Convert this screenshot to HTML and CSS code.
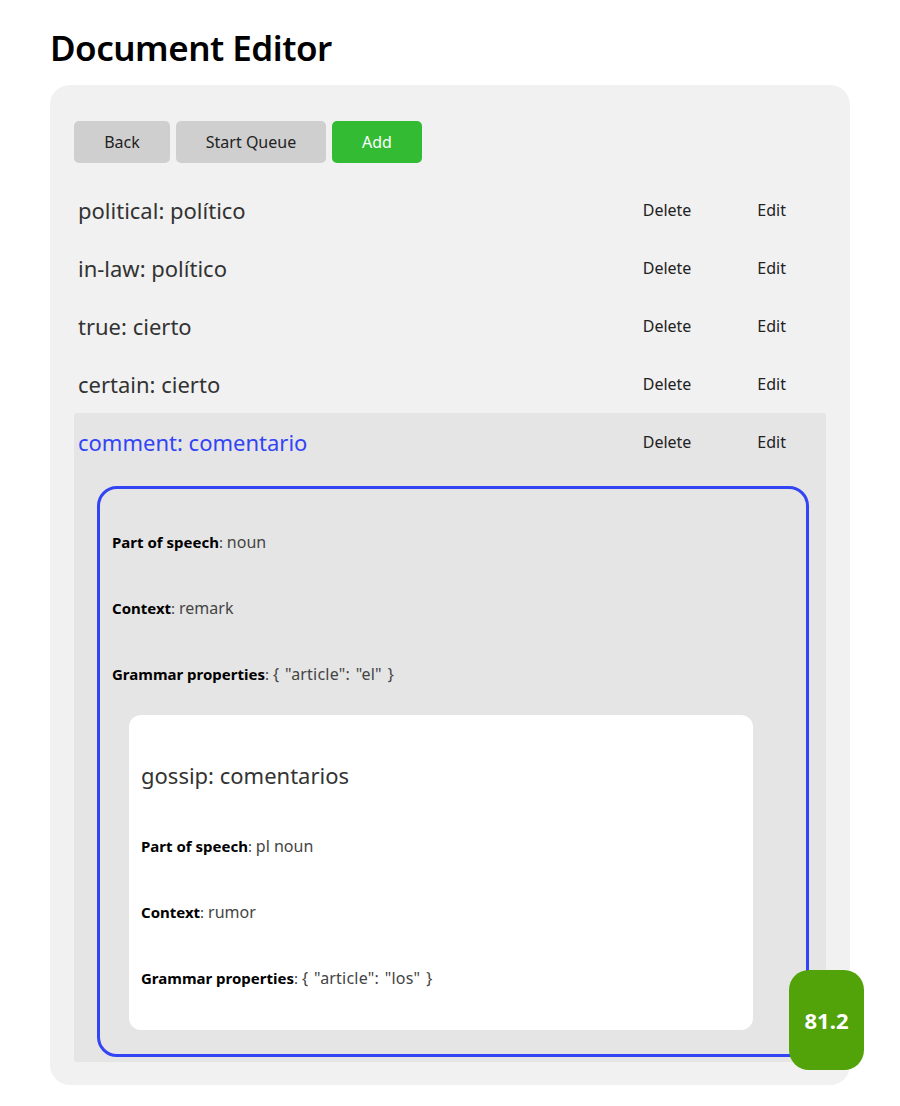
FILE: index.html
```html
<!DOCTYPE html>
<html lang="en">
<head>
<meta charset="utf-8">
<title>Document Editor</title>
<link rel="stylesheet" href="styles.css">
</head>
<body>
<div class="page">
  <h1 class="title">Document Editor</h1>
  <div class="panel">
    <div class="toolbar">
      <button class="btn btn-grey btn-back">Back</button>
      <button class="btn btn-grey btn-queue">Start Queue</button>
      <button class="btn btn-green btn-add">Add</button>
    </div>
    <div class="list">
      <div class="row">
        <div class="row-head">
          <span class="term">political: político</span>
          <div class="actions"><button class="link">Delete</button><button class="link">Edit</button></div>
        </div>
      </div>
      <div class="row">
        <div class="row-head">
          <span class="term">in-law: político</span>
          <div class="actions"><button class="link">Delete</button><button class="link">Edit</button></div>
        </div>
      </div>
      <div class="row">
        <div class="row-head">
          <span class="term">true: cierto</span>
          <div class="actions"><button class="link">Delete</button><button class="link">Edit</button></div>
        </div>
      </div>
      <div class="row">
        <div class="row-head">
          <span class="term">certain: cierto</span>
          <div class="actions"><button class="link">Delete</button><button class="link">Edit</button></div>
        </div>
      </div>
      <div class="row row-selected">
        <div class="row-head">
          <span class="term term-active">comment: comentario</span>
          <div class="actions"><button class="link">Delete</button><button class="link">Edit</button></div>
        </div>
        <div class="detail">
          <div class="field"><span class="label">Part of speech</span>: <span class="value">noun</span></div>
          <div class="field"><span class="label">Context</span>: <span class="value">remark</span></div>
          <div class="field"><span class="label">Grammar properties</span>: <span class="value value-json">{ "article": "el" }</span></div>
          <div class="sense">
            <div class="sense-title">gossip: comentarios</div>
            <div class="field"><span class="label">Part of speech</span>: <span class="value">pl noun</span></div>
            <div class="field"><span class="label">Context</span>: <span class="value">rumor</span></div>
            <div class="field"><span class="label">Grammar properties</span>: <span class="value value-json">{ "article": "los" }</span></div>
          </div>
        </div>
      </div>
    </div>
  </div>
</div>
<div class="score">81.2</div>
</body>
</html>
```

FILE: styles.css
```css
* { box-sizing: border-box; }

body {
  margin: 0;
  font-family: "Noto Sans", "Open Sans", sans-serif;
  color: #222;
  background: #ffffff;
}

.page {
  margin: 0 50px;
}

.title {
  margin: 24px 0 14px 0;
  font-size: 35px;
  font-weight: 600;
  line-height: normal;
  color: #000;
  letter-spacing: -0.5px;
}

.panel {
  background: #f1f1f1;
  border-radius: 20px;
  padding: 36px 24px 23px 24px;
}

.toolbar {
  display: flex;
  gap: 6px;
  margin-bottom: 18px;
}

.btn {
  height: 42px;
  border: none;
  border-radius: 5px;
  font-family: inherit;
  font-size: 16px;
  padding: 0;
  cursor: pointer;
}

.btn-grey { background: #cfcfcf; color: #222; }
.btn-green { background: #33bb33; color: #ffffff; }
.btn-back { width: 96px; }
.btn-queue { width: 150px; }
.btn-add { width: 90px; }

.row-head {
  height: 58px;
  display: flex;
  align-items: center;
  justify-content: space-between;
  padding-left: 4px;
  padding-right: 40px;
}

.term {
  font-size: 22px;
  color: #333;
}

.term-active {
  color: #3344f5;
}

.actions {
  display: flex;
  gap: 66px;
}

.link {
  background: none;
  border: none;
  padding: 0;
  font-family: inherit;
  font-size: 16px;
  color: #222;
  cursor: pointer;
}

.row-selected {
  background: #e5e5e5;
  border-radius: 3px;
  padding-bottom: 5px;
}

.detail {
  margin: 15px 17px 0 23px;
  border: 3px solid #3344f5;
  border-radius: 20px;
  padding: 20px 53px 24px 12px;
}

.field {
  height: 66px;
  display: flex;
  align-items: center;
  font-size: 15px;
  color: #444;
  white-space: pre;
}

.label {
  font-weight: 700;
  color: #000;
}

.value {
  font-size: 16px;
  color: #444;
}

.value-json {
  word-spacing: 1.5px;
  letter-spacing: 0.2px;
}

.sense {
  margin: 8px 0 0 17px;
  background: #ffffff;
  border-radius: 12px;
  padding: 40px 12px 19px 12px;
}

.sense-title {
  font-size: 22px;
  line-height: 40px;
  color: #333;
  margin-bottom: 18px;
}

.score {
  position: fixed;
  right: 36px;
  bottom: 36px;
  width: 75px;
  height: 100px;
  border-radius: 20px;
  background: #52a20a;
  color: #ffffff;
  font-size: 22px;
  font-weight: 700;
  display: flex;
  align-items: center;
  justify-content: center;
}
```
